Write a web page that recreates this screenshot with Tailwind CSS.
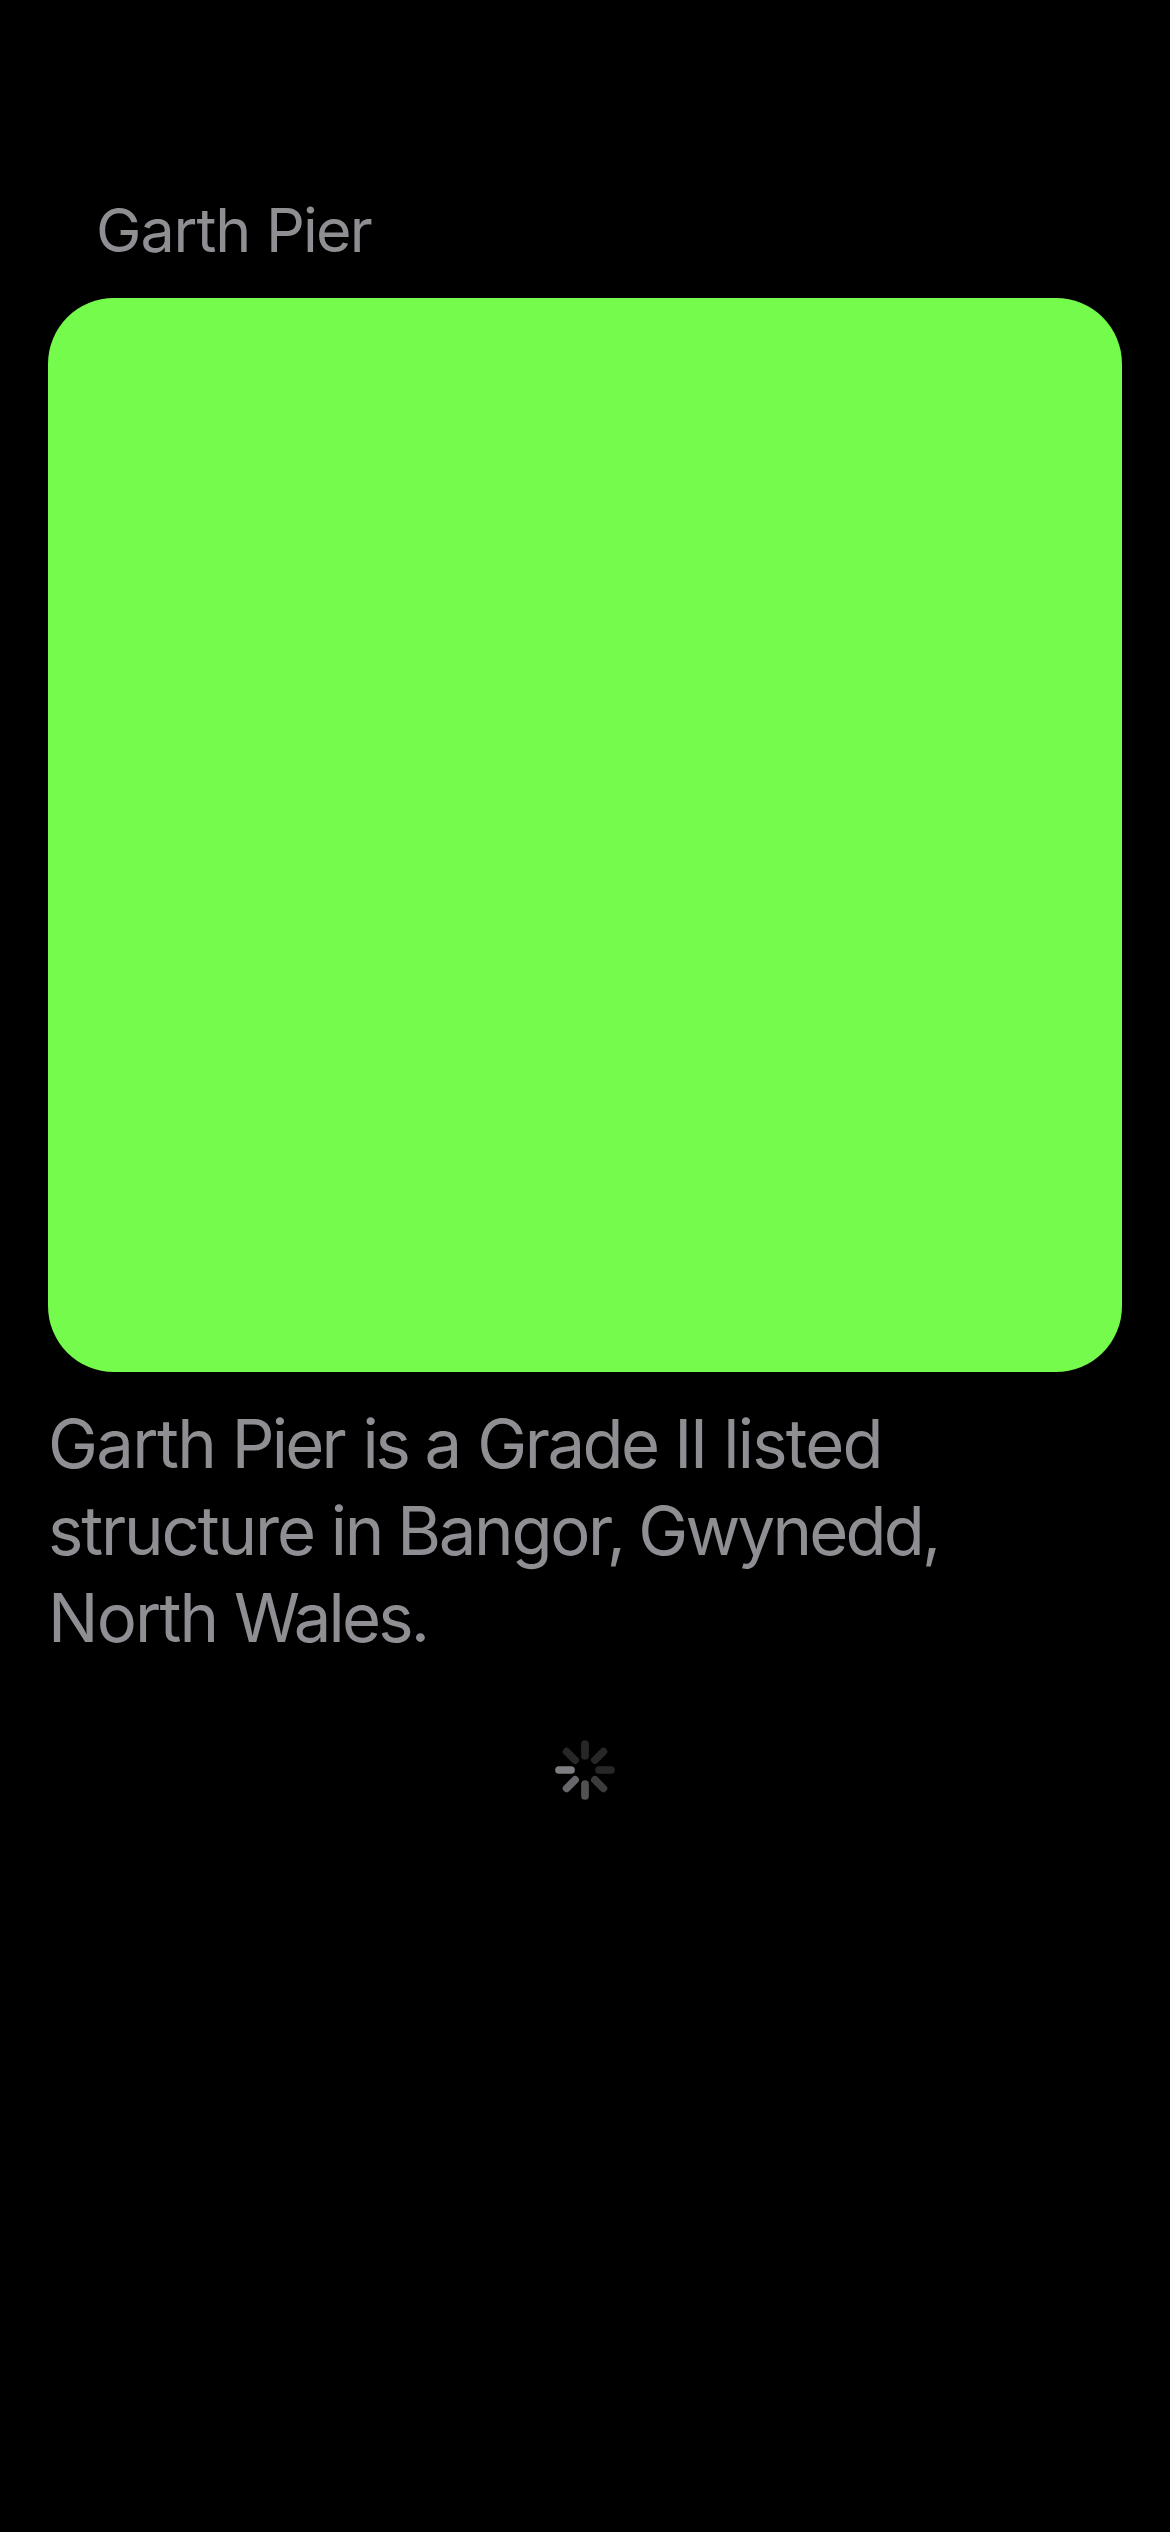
<!DOCTYPE html>
<html lang="en"><head><meta charset="utf-8"><title>Garth Pier</title>
<script src="https://cdn.jsdelivr.net/npm/@tailwindcss/browser@4"></script></head>
<body class="bg-black">
<main class="flex h-[2532px] w-[1170px] flex-col bg-black px-12 pt-[190px] font-[Inter,sans-serif] text-[#8e8e93]">
<h1 class="h-[108px] whitespace-nowrap pl-12 text-[61px] leading-[80px] tracking-[-1.42px]"><span class="tracking-[-1.1px]">Garth</span> <span class="tracking-[-1.85px]">Pier</span></h1>
<div class="size-[1074px] shrink-0 rounded-[66px] bg-[#75fb4c]"></div>
<p class="mt-7 whitespace-nowrap text-[67px] leading-[87px]"><span class="tracking-[-2.22px]"><span class="tracking-[-1.64px]">Garth</span> <span class="mr-[1.9px] tracking-[-2.77px]">Pier</span> <span class="tracking-[-3.2px]">is</span> <span class="mr-[0.7px]">a</span> <span class="tracking-[-2.47px]">Grade</span> <span class="mr-[0.7px]">II</span> <span class="tracking-[-1.75px]">listed</span></span><br><span class="tracking-[-2.52px]"><span class="mr-[0.6px] tracking-[-2.14px]">structure</span> <span class="mr-[-1.3px] tracking-[-2.2px]">in</span> <span class="mr-[-1.9px] tracking-[-2.3px]">Bangor,</span> <span class="tracking-[-2.77px]">Gwynedd,</span></span><br><span class="tracking-[-2.39px]"><span class="tracking-[-1.81px]">North</span> <span class="tracking-[-2.79px]">Wales.</span></span></p>
<svg class="mt-[79px] size-[60px] self-center" viewBox="-30 -30 60 60" stroke-width="7.7" stroke-linecap="round">
<path d="M0-14V-26" stroke="#272728"/>
<path d="M0-14V-26" stroke="#272728" transform="rotate(45)"/>
<path d="M0-14V-26" stroke="#272728" transform="rotate(90)"/>
<path d="M0-14V-26" stroke="#3c3c3e" transform="rotate(135)"/>
<path d="M0-14V-26" stroke="#525255" transform="rotate(180)"/>
<path d="M0-14V-26" stroke="#68686c" transform="rotate(225)"/>
<path d="M0-14V-26" stroke="#7e7e82" transform="rotate(270)"/>
<path d="M0-14V-26" stroke="#272728" transform="rotate(315)"/>
</svg>
</main></body></html>
